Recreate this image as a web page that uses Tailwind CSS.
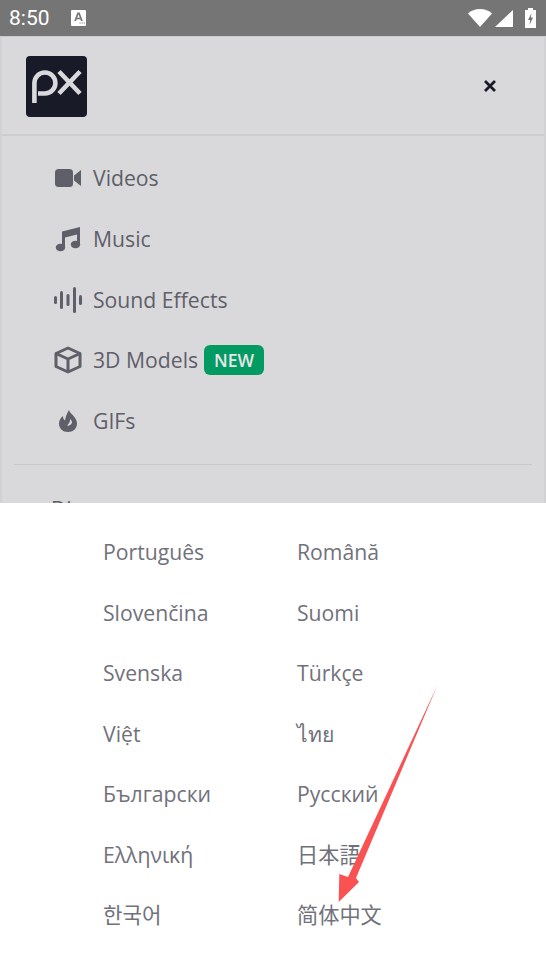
<!DOCTYPE html>
<html lang="en">
<head>
    <meta charset="UTF-8">
    <meta name="viewport" content="width=device-width, initial-scale=1.0">
    <title>Languages</title>
    <script src="https://cdn.jsdelivr.net/npm/@tailwindcss/browser@4"></script>
</head>
<body class="relative w-[546px] h-[970px] overflow-hidden bg-white font-['Open_Sans','Noto_Sans_CJK_KR',sans-serif]">

    <!-- Status bar -->
    <div class="h-[36px] bg-[#757575] flex items-center pl-[9px] pr-[10px] text-white">
        <span class="font-['Roboto',sans-serif] text-[21px] leading-none">8:50</span>
        <svg class="ml-[21px]" width="15" height="16" viewBox="0 0 14 16" preserveAspectRatio="none">
            <path fill="#fff" d="M1 0h12a1 1 0 0 1 1 1v14a1 1 0 0 1-1 1H1a1 1 0 0 1-1-1V1a1 1 0 0 1 1-1z"/>
            <path fill="#757575" d="M5.900 2.500h2.200L11 11H9.300l-.6-1.800H5.300L4.700 11H3zM5.800 7.800h2.400L7 4.300z"/>
            <path fill="#757575" d="M8 12.500h1v1H8zM10 12.500h1v1h-1zM12 12.500h1v1h-1z"/>
        </svg>
        <div class="ml-auto flex items-center">
            <svg width="24" height="18" viewBox="0 0 24 18"><path fill="#fff" d="M0 4.500C3 1.600 7.200 0 12 0s9 1.600 12 4.500L12 18z"/></svg>
            <svg class="ml-[3px]" width="18" height="17" viewBox="0 0 18 17"><path fill="#fff" d="M18 0v17H0z"/></svg>
            <svg class="ml-[12px]" width="11" height="20" viewBox="0 0 11 20">
                <path fill="#fff" d="M3 0h5v2h3v18H0V2h3z"/>
                <path fill="#757575" d="M6.500 5 3 12h2.200L4.500 17 8 9.500H5.800z"/>
            </svg>
        </div>
    </div>

    <!-- Dimmed menu behind the sheet -->
    <div class="h-[467px] overflow-hidden bg-[#d9d9dc] border-t border-[#cbcbce] border-x-2 border-x-[#d2d2d5]">
        <div class="h-[99px] flex items-center justify-between pl-[24px] pr-[48px] border-b-2 border-[#cdcdd0]">
            <div class="w-[61px] h-[61px] mt-[1px] rounded-[4px] bg-[#181a28]">
                <svg width="61" height="61" viewBox="0 0 61 61" fill="none" stroke="#d9d9dc" stroke-width="4.600">
                    <path d="M8.400 47V27a10.500 10.500 0 1 1 10.500 10.500H12"/>
                    <path d="M33 15.500l21 22M54 15.500L33 37.500"/>
                </svg>
            </div>
            <svg width="12" height="12" viewBox="0 0 12 12" fill="none" stroke="#181a28" stroke-width="2.800"><path d="M1 1l10 10M11 1L1 11"/></svg>
        </div>
        <nav class="pt-[12px] pl-[52px] pr-[12px] text-[21.200px] leading-[28px] text-[#5f5f69]">
            <div class="h-[60.700px] flex items-center gap-[11px]">
                <span class="w-[28px] flex justify-center">
                    <svg width="26" height="18" viewBox="0 0 26 18" fill="#5f5f69"><rect width="18" height="18" rx="3.500"/><path d="M19 6.500 26 1v16l-7-5.500z"/></svg>
                </span>
                Videos
            </div>
            <div class="h-[60.700px] flex items-center gap-[11px]">
                <span class="w-[28px] flex justify-center">
                    <svg width="26" height="26" viewBox="0 0 26 26" fill="#5f5f69"><path d="M7 5.500 25 1v17h-3V8.500L10 11.500V22H7z"/><ellipse cx="5.500" cy="21.500" rx="4.700" ry="3.800"/><ellipse cx="20.500" cy="18.500" rx="4.700" ry="3.800"/></svg>
                </span>
                Music
            </div>
            <div class="h-[60.700px] flex items-center gap-[11px]">
                <span class="w-[28px] flex justify-center">
                    <svg width="28" height="26" viewBox="0 0 28 26" fill="#5f5f69"><rect x="0" y="9" width="3" height="8" rx="1.500"/><rect x="6" y="4" width="3" height="18" rx="1.500"/><rect x="12.500" y="7" width="3" height="12" rx="1.500"/><rect x="19" y="0" width="3" height="26" rx="1.500"/><rect x="25" y="8" width="3" height="10" rx="1.500"/></svg>
                </span>
                Sound Effects
            </div>
            <div class="h-[60.700px] flex items-center gap-[11px]">
                <span class="w-[28px] flex justify-center">
                    <svg width="28" height="28" viewBox="0 0 28 28" fill="none" stroke="#5f5f69" stroke-width="3" stroke-linejoin="round"><path d="M14 2 26 7.500v13L14 26 2 20.500v-13z"/><path d="M2 7.500 14 13l12-5.500M14 13v13"/></svg>
                </span>
                <span>3D Models</span>
                <span class="ml-[-5px] h-[30px] w-[60px] rounded-[6px] bg-[#049a63] text-[#e6e6e8] text-[17.500px] font-semibold flex items-center justify-center">NEW</span>
            </div>
            <div class="h-[60.700px] flex items-center gap-[11px]">
                <span class="w-[28px] flex justify-center">
                    <svg width="18" height="22" viewBox="0 0 18 22" fill="#5f5f69"><path d="M10 0c1 4 8 7 8 13.500C18 18.500 14 22 9 22s-9-3.500-9-8.500C0 10 2 7.500 4 6c0 2 .6 3.500 2 4.500C6.500 7 8 3 10 0zM11 9c.5 3-1.500 5-3 6.500 2 .5 4.500-.5 5-3 .2-1.500-1-2.500-2-3.500z"/></svg>
                </span>
                GIFs
            </div>
        </nav>
        <div class="mx-[12px] mt-[13px] border-t border-[#c8c8cb]"></div>
        <div class="pl-[49px] pt-[30px] text-[21.200px] leading-[28px] text-[#5f5f69]">Discover</div>
    </div>

    <!-- Language sheet -->
    <div class="pt-[19px] pl-[103px] grid grid-cols-[194px_1fr] auto-rows-[60.500px] text-[21.200px] leading-[60.500px] text-[#71717b]">
        <div>Português</div><div>Română</div>
        <div>Slovenčina</div><div>Suomi</div>
        <div>Svenska</div><div>Türkçe</div>
        <div>Việt</div><div>ไทย</div>
        <div>Български</div><div>Русский</div>
        <div>Ελληνική</div><div class="font-['Open_Sans','Noto_Sans_CJK_JP',sans-serif]">日本語</div>
        <div>한국어</div><div class="font-['Open_Sans','Noto_Sans_CJK_SC',sans-serif]">简体中文</div>
    </div>

    <!-- Red annotation arrow -->
    <svg class="absolute left-0 top-0" width="546" height="970" viewBox="0 0 546 970">
        <path fill="#fa5252" d="M437.500 685 L356 878 L359 882 L338.700 902 L339.300 874 L348 877 z"/>
    </svg>

</body>
</html>
